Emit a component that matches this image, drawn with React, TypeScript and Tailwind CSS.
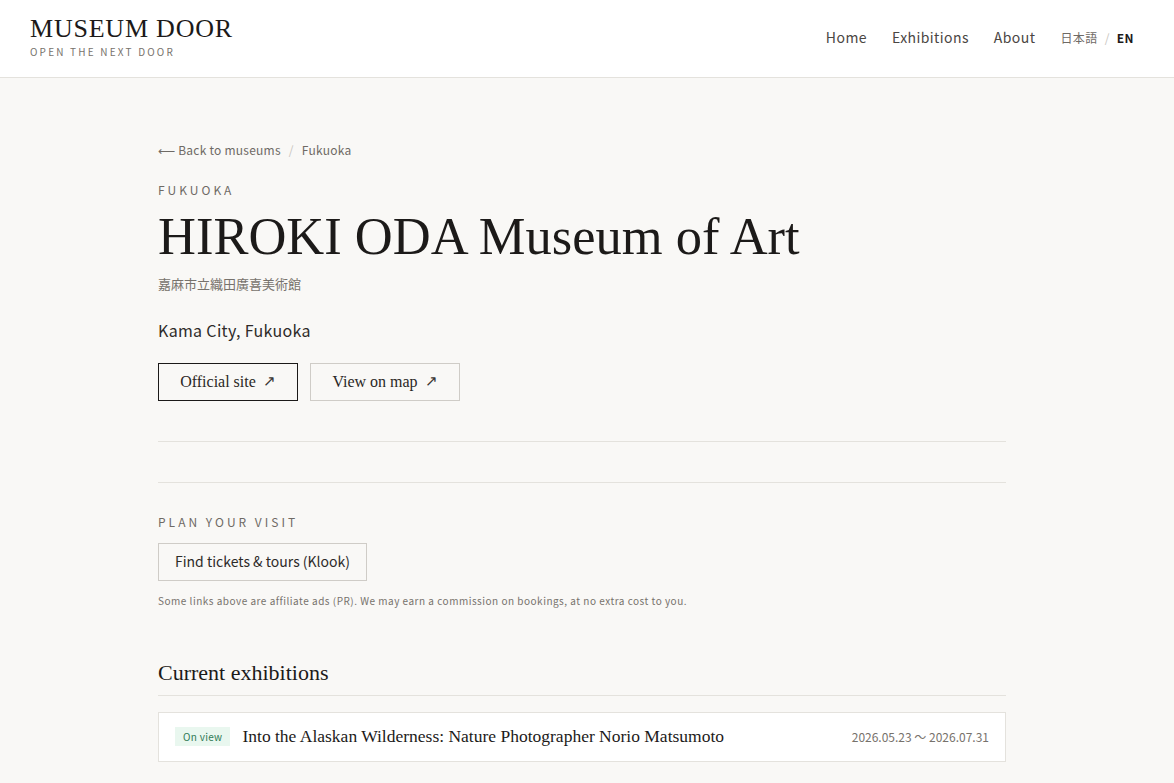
const serif = "font-['Liberation_Serif',serif]"
const sans = "font-['Noto_Sans_CJK_JP','Noto_Sans',sans-serif]"

type Exhibition = {
  id: number
  title: string
  period: string
}

const exhibitions: Exhibition[] = [
  {
    id: 1,
    title: "Into the Alaskan Wilderness: Nature Photographer Norio Matsumoto",
    period: "2026.05.23 〜 2026.07.31",
  },
]

const Header = () => (
  <header className="flex items-center justify-between h-[78px] px-[30px] bg-white border-b border-[#e4e2dd]">
    <div className="flex flex-col -mt-[4px]">
      <span className={`${serif} text-[26px] leading-none tracking-[0.03em] text-[#1c1a19]`}>MUSEUM DOOR</span>
      <span className={`${sans} text-[10px] leading-none mt-[5px] tracking-[0.22em] text-[#77726c]`}>OPEN THE NEXT DOOR</span>
    </div>
    <nav className={`${sans} flex items-center gap-[25px] text-[14px] tracking-[0.03em] text-[#4a4643] pr-[10px] -mt-[2px]`}>
      <a>Home</a>
      <a>Exhibitions</a>
      <a>About</a>
      <div className="flex items-center gap-[7px] text-[12px]">
        <span className="text-[#6f6a65]">日本語</span>
        <span className="text-[#c9c5c0]">/</span>
        <span className="font-bold text-[#1c1a19]">EN</span>
      </div>
    </nav>
  </header>
)

const OutlineLink = ({ label, dark }: { label: string; dark?: boolean }) => (
  <a
    className={`${serif} flex items-center justify-center gap-[7px] h-[38px] text-[16px] text-[#2a2725] border ${
      dark ? "border-[#1c1a19] w-[140px]" : "border-[#cfccc7] w-[150px]"
    }`}
  >
    {label}
    <span className="text-[15px] text-[#3a3633]">↗</span>
  </a>
)

const App = () => {
  return (
    <div className={`min-h-screen bg-[#f9f8f6] ${sans}`}>
      <Header />
      <main className="w-[848px] ml-[158px] pt-[63px] pb-[40px]">
        <div className="flex items-center gap-[8px] text-[12px] tracking-[0.02em] text-[#6f6a65]">
          <span>⟵ Back to museums</span>
          <span className="text-[#c9c5c0]">/</span>
          <span>Fukuoka</span>
        </div>

        <p className="mt-[25px] text-[12px] tracking-[0.25em] text-[#6f6a65] leading-none">FUKUOKA</p>
        <h1 className={`${serif} mt-[10px] text-[52.5px] leading-[60px] text-[#1c1a19]`}>
          HIROKI ODA Museum of Art
        </h1>
        <p className="mt-[8px] text-[13px] text-[#77726c]">嘉麻市立織田廣喜美術館</p>
        <p className="mt-[24px] text-[16px] tracking-[0.02em] text-[#2e2b29]">Kama City, Fukuoka</p>

        <div className="flex gap-[12px] mt-[21px]">
          <OutlineLink label="Official site" dark />
          <OutlineLink label="View on map" />
        </div>

        <div className="mt-[40px] border-t border-[#e4e2dd]" />
        <div className="mt-[40px] border-t border-[#e4e2dd]" />

        <p className="mt-[33px] text-[12px] tracking-[0.25em] text-[#6f6a65] leading-none">PLAN YOUR VISIT</p>
        <a className="mt-[15px] inline-flex items-center h-[38px] px-[16px] border border-[#cfccc7] text-[14px] text-[#2e2b29]">
          Find tickets &amp; tours (Klook)
        </a>
        <p className="mt-[12px] text-[10px] tracking-[0.05em] text-[#77726c]">
          Some links above are affiliate ads (PR). We may earn a commission on bookings, at no extra cost to you.
        </p>

        <h2 className={`${serif} mt-[48px] text-[22px] text-[#1c1a19] pb-[6px] border-b border-[#e4e2dd]`}>
          Current exhibitions
        </h2>
        <ul className="mt-[16px]">
          {exhibitions.map(ex => (
            <li
              key={ex.id}
              className="flex items-center h-[50px] px-[16px] bg-white border border-[#e4e2dd]"
            >
              <span className="px-[8px] py-[2px] text-[10px] bg-[#e9f7ef] text-[#2f7a56] tracking-[0.03em]">On view</span>
              <span className={`${serif} ml-[12px] text-[17.5px] text-[#1c1a19]`}>{ex.title}</span>
              <span className="ml-auto text-[12px] text-[#77726c]">{ex.period}</span>
            </li>
          ))}
        </ul>
      </main>
    </div>
  )
}

export default App
